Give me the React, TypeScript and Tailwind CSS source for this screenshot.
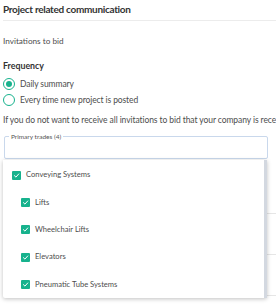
import React from "react";

function Check() {
  return (
    <span className="flex h-[9px] w-[9px] items-center justify-center rounded-[1px] bg-[#17b28d]">
      <svg width="7" height="7" viewBox="0 0 10 10" fill="none">
        <path d="M2 5.2 L4.2 7.3 L8.2 2.8" stroke="white" strokeWidth="1.4" strokeLinecap="round" strokeLinejoin="round" />
      </svg>
    </span>
  );
}

function Radio({ checked, label }: { checked?: boolean; label: string }) {
  return (
    <div className="flex h-[16px] items-center gap-[5px]">
      <span className="flex h-[12px] w-[12px] items-center justify-center rounded-full border-[1.5px] border-[#17b28d]">
        {checked && <span className="h-[6px] w-[6px] rounded-full bg-[#17b28d]" />}
      </span>
      <span className="text-[8.5px] tracking-[-0.1px] text-[#4d4d4d]">{label}</span>
    </div>
  );
}

export default function App() {
  const items = [
    { label: "Conveying Systems", sub: false },
    { label: "Lifts", sub: true },
    { label: "Wheelchair Lifts", sub: true },
    { label: "Elevators", sub: true },
    { label: "Pneumatic Tube Systems", sub: true },
  ];
  return (
    <div className="relative h-[307px] w-[276px] overflow-hidden bg-white" style={{ fontFamily: "Lato, 'Liberation Sans', sans-serif" }}>
      <div className="pl-[3px]">
        <div className="pt-[3px] text-[10px] font-bold leading-[13px] tracking-[-0.3px] text-[#333]">Project related communication</div>
        <div className="mt-[4px] h-px bg-[#ececec]" />
        <div className="mt-[14px] text-[8.2px] leading-[12px] text-[#4d4d4d]">Invitations to bid</div>
        <div className="mt-[13px] text-[8.8px] font-bold leading-[12px] text-[#333]">Frequency</div>
        <div className="mt-[4px] flex flex-col">
          <Radio checked label="Daily summary" />
          <Radio label="Every time new project is posted" />
        </div>
        <div className="mt-[6px] whitespace-nowrap text-[8.5px] leading-[12px] tracking-[-0.08px] text-[#4d4d4d]">
          If you do not want to receive all invitations to bid that your company is receiving
        </div>
        <div className="relative ml-[1px] mt-[10px] h-[23px] w-[264px] rounded-[2px] border border-[#c9d8ec]">
          <span className="absolute -top-[5px] left-[4px] bg-white px-[2px] text-[6.5px] leading-[9px] text-[#555]">Primary trades (4)</span>
        </div>
        <div className="mt-[15px] flex flex-col">
          <div className="h-[40px] border-b border-[#e6e6e6]" />
          <div className="h-[41px] border-b border-[#e6e6e6]" />
          <div className="h-[41px] border-b border-[#e6e6e6]" />
        </div>
      </div>
      <div className="absolute left-[3px] top-[160px] flex h-[138px] w-[264px] rounded-b-[2px] bg-white shadow-[0_1px_4px_rgba(0,0,0,0.25)]">
        <div className="flex flex-1 flex-col pt-[1.5px]">
          {items.map((it) => (
            <div key={it.label} className={`flex h-[27.5px] items-center gap-[5px] ${it.sub ? "pl-[18px]" : "pl-[9px]"}`}>
              <Check />
              <span className="text-[7.6px] text-[#4d4d4d]">{it.label}</span>
            </div>
          ))}
        </div>
        <div className="w-[3px] bg-[#d3d8e0]" />
      </div>
    </div>
  );
}
